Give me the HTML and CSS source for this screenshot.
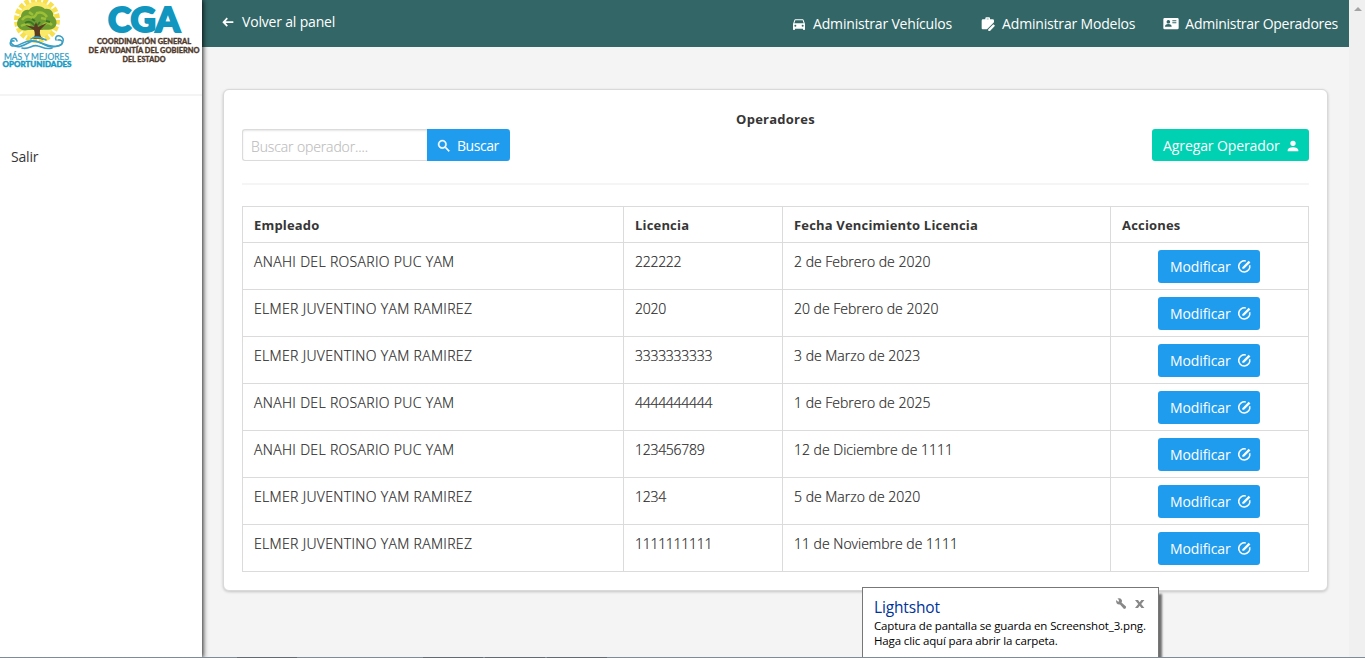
FILE: index.html
```
<!DOCTYPE html>
<html lang="es">
<head>
<meta charset="utf-8">
<title>Operadores</title>
<link rel="stylesheet" href="styles.css">
</head>
<body>
<svg class="defs" aria-hidden="true">
  <symbol id="i-edit" viewBox="0 0 24 24"><path d="M20.300 10A8.900 8.900 0 1 1 14 3.300" fill="none" stroke="currentColor" stroke-width="2.500"/><path d="M8.500 13 18.700 2.800l2.700 2.700L11.200 15.700H8.500z" fill="currentColor"/></symbol>
</svg>
<div class="app">
  <aside class="sidebar">
    <div class="brand">
      <svg class="logo" width="202" height="72" viewBox="0 0 202 72">
        <circle cx="37" cy="20" r="18.500" fill="#fbe96a"/>
        <circle cx="37" cy="20" r="20.500" fill="none" stroke="#f8e04d" stroke-width="5" stroke-dasharray="4.500 1.900"/>
        <path d="M19 28c-4-4-1-10 2-11 0-5 4-8 8-7 3-5 12-5 16-1 5-1 9 3 8 7 4 3 5 9 1 12-5 3-9 1-12 2H28c-4 1-7 0-9-2z" fill="#6e9e31"/>
        <path d="M22 20q4-5 8-3t7-4q6-2 10 4M21 26q5-3 9 0M43 25q5-4 9 0M29 12l4 3M41 18l5 1" fill="none" stroke="#9cbf35" stroke-width="2.500"/>
        <path d="M25 23q5-3 8 1t7-2M46 21l4 1M32 19l3 2" fill="none" stroke="#3c7528" stroke-width="2"/>
        <path d="M33 39q3-4 1-9l-9-5 9 2 2-5 2 5 9-4-7 7q-1 6 4 10-6-2-11-1z" fill="#5c3a22"/>
        <g fill="none" stroke="#3a9fc3" stroke-width="1.600" stroke-linecap="round">
          <path d="M14 41c-5-1-5 5 0 5 8 0 10-7 20-5 9 1 13 7 23 5 8-1 6-7 1-6"/>
          <path d="M17 41c-2-6-9-1-5 3 6 6 14 0 18-2 8-4 14 5 22 5 12 0 14-9 8-11-4-1-5 2-4 4"/>
          <path d="M22 48c7 2 10-4 16-2 5 1 7 4 14 2M31 39c5-4 11-1 15 1"/>
        </g>
        <text class="slogan" x="4" y="59.500" textLength="65" lengthAdjust="spacingAndGlyphs">MÁS Y MEJORES</text>
        <text class="slogan strong" x="2.500" y="67" textLength="69" lengthAdjust="spacingAndGlyphs">OPORTUNIDADES</text>
        <text class="cga" x="108" y="32.300" textLength="72" lengthAdjust="spacingAndGlyphs">CGA</text>
        <text class="org" x="97" y="44" textLength="94" lengthAdjust="spacingAndGlyphs">COORDINACIÓN GENERAL</text>
        <text class="org" x="88.500" y="53" textLength="111" lengthAdjust="spacingAndGlyphs">DE AYUDANTÍA DEL GOBIERNO</text>
        <text class="org" x="122.500" y="62" textLength="43" lengthAdjust="spacingAndGlyphs">DEL ESTADO</text>
      </svg>
    </div>
    <nav class="side-nav"><a>Salir</a></nav>
  </aside>
  <div class="page">
    <header class="topbar">
      <a class="back"><svg width="16" height="16" viewBox="0 0 24 24"><path d="M20 10.800v2.800H8.500l3.300 3.600-1.800 1.800-6.500-6.800L10 5.400l1.800 1.800-3.300 3.600z" fill="currentColor"/></svg><span>Volver al panel</span></a>
      <nav class="top-nav">
        <a class="nv"><svg width="16" height="16" viewBox="0 0 24 24"><path fill="currentColor" d="M5,11L6.500,6.500H17.500L19,11M17.500,16A1.500,1.500 0 0,1 16,14.500A1.500,1.500 0 0,1 17.500,13A1.500,1.500 0 0,1 19,14.500A1.500,1.500 0 0,1 17.500,16M6.500,16A1.500,1.500 0 0,1 5,14.500A1.500,1.500 0 0,1 6.500,13A1.500,1.500 0 0,1 8,14.500A1.500,1.500 0 0,1 6.500,16M18.920,6C18.720,5.420 18.160,5 17.500,5H6.500C5.840,5 5.280,5.420 5.080,6L3,12V20A1,1 0 0,0 4,21H5A1,1 0 0,0 6,20V19H18V20A1,1 0 0,0 19,21H20A1,1 0 0,0 21,20V12L18.920,6Z"/></svg><span>Administrar Vehículos</span></a>
        <a class="nm"><svg width="16" height="16" viewBox="0 0 24 24"><path fill="currentColor" fill-rule="evenodd" d="M8 5V3.500q0-1.500 1.500-1.500h4q1.500 0 1.500 1.500V5h4q2 0 2 2v2.500L10.500 20H4q-1.500 0-1.500-1.500V7q0-2 2-2zm2 0h3V4h-3z"/><path fill="currentColor" d="M12.500 20 20 12.300l2.500 2.500L15 22.500h-2.500z"/></svg><span>Administrar Modelos</span></a>
        <a class="no"><svg width="16" height="16" viewBox="0 0 24 24"><path fill="currentColor" fill-rule="evenodd" d="M2.500 3h19Q23.500 3 23.500 5v13q0 2-2 2h-19q-2 0-2-2V5q0-2 2-2zM8 6a2.700 2.700 0 1 0 .1 0zM3 16h10q0-4-5-4t-5 4zm11-9.500V8h6V6.500zm0 3V11h6V9.500z"/></svg><span>Administrar Operadores</span></a>
      </nav>
    </header>
    <main class="card">
      <h1>Operadores</h1>
      <div class="tools">
        <div class="search"><input type="text" placeholder="Buscar operador...."><button class="btn find"><svg width="16" height="16" viewBox="0 0 24 24"><path fill="currentColor" stroke="currentColor" stroke-width=".5" d="M9.500,3A6.500,6.500 0 0,1 16,9.500C16,11.110 15.410,12.590 14.440,13.730L14.710,14H15.500L20.500,19L19,20.500L14,15.500V14.710L13.730,14.440C12.590,15.410 11.110,16 9.500,16A6.500,6.500 0 0,1 3,9.500A6.500,6.500 0 0,1 9.500,3M9.500,5C7,5 5,7 5,9.500C5,12 7,14 9.500,14C12,14 14,12 14,9.500C14,7 12,5 9.500,5Z"/></svg><span>Buscar</span></button></div>
        <button class="btn add"><span>Agregar Operador</span><svg width="16" height="16" viewBox="0 0 24 24"><path fill="currentColor" d="M12,4A4,4 0 0,1 16,8A4,4 0 0,1 12,12A4,4 0 0,1 8,8A4,4 0 0,1 12,4M12,14C16.420,14 20,15.790 20,18V20H4V18C4,15.790 7.580,14 12,14Z"/></svg></button>
      </div>
      <hr>
      <table>
        <colgroup><col class="c1"><col class="c2"><col class="c3"><col class="c4"></colgroup>
        <thead><tr><th>Empleado</th><th>Licencia</th><th>Fecha Vencimiento Licencia</th><th>Acciones</th></tr></thead>
        <tbody>
          <tr><td>ANAHI DEL ROSARIO PUC YAM</td><td>222222</td><td>2 de Febrero de 2020</td><td><button class="btn mod"><span>Modificar</span><svg width="15" height="15"><use href="#i-edit"/></svg></button></td></tr>
          <tr><td>ELMER JUVENTINO YAM RAMIREZ</td><td>2020</td><td>20 de Febrero de 2020</td><td><button class="btn mod"><span>Modificar</span><svg width="15" height="15"><use href="#i-edit"/></svg></button></td></tr>
          <tr><td>ELMER JUVENTINO YAM RAMIREZ</td><td>3333333333</td><td>3 de Marzo de 2023</td><td><button class="btn mod"><span>Modificar</span><svg width="15" height="15"><use href="#i-edit"/></svg></button></td></tr>
          <tr><td>ANAHI DEL ROSARIO PUC YAM</td><td>4444444444</td><td>1 de Febrero de 2025</td><td><button class="btn mod"><span>Modificar</span><svg width="15" height="15"><use href="#i-edit"/></svg></button></td></tr>
          <tr><td>ANAHI DEL ROSARIO PUC YAM</td><td>123456789</td><td>12 de Diciembre de 1111</td><td><button class="btn mod"><span>Modificar</span><svg width="15" height="15"><use href="#i-edit"/></svg></button></td></tr>
          <tr><td>ELMER JUVENTINO YAM RAMIREZ</td><td>1234</td><td>5 de Marzo de 2020</td><td><button class="btn mod"><span>Modificar</span><svg width="15" height="15"><use href="#i-edit"/></svg></button></td></tr>
          <tr><td>ELMER JUVENTINO YAM RAMIREZ</td><td>1111111111</td><td>11 de Noviembre de 1111</td><td><button class="btn mod"><span>Modificar</span><svg width="15" height="15"><use href="#i-edit"/></svg></button></td></tr>
        </tbody>
      </table>
    </main>
  </div>
  <div class="scrollbar"><span class="arrow-up"></span></div>
</div>
<div class="toast">
  <div class="toast-head"><strong>Lightshot</strong>
    <svg width="30" height="12" viewBox="0 0 30 12"><path d="M1 2l2.500 2L4 2 2.500.600Q6-.5 7 2.500q0 1.500-.5 2L11 8.500Q11.500 11 9 11L5 6.500Q1 7 1 2z" fill="#888"/><path d="M20 2h3l1.700 2.200L26.400 2h3l-3.200 4 3.200 4h-3l-1.700-2.200L23 10h-3l3.200-4z" fill="#888"/></svg>
  </div>
  <p class="l1">Captura de pantalla se guarda en Screenshot_3.png.</p>
  <p class="l2">Haga clic aquí para abrir la carpeta.</p>
</div>
<div class="taskbar"><i></i><i></i><i></i><i></i></div>
</body>
</html>
```
FILE: styles.css
```
* { box-sizing: border-box; }
html, body { height: 100%; overflow: hidden; }
body { margin: 0; background: #f4f4f4; color: #363636; font: 14px/21px "Open Sans", "Noto Sans", sans-serif; letter-spacing: 0; }
.defs { position: absolute; width: 0; height: 0; }
.app { display: flex; height: 658px; }
.sidebar { position: relative; z-index: 2; width: 202px; background: #fff; box-shadow: 1px 0 5px rgba(0,0,0,.9); flex: none; }
.brand { height: 96px; border-bottom: 2px solid #f4f4f4; }
.logo { display: block; overflow: visible; font-family: Lato, sans-serif; letter-spacing: 0; }
.slogan { font-size: 8.5px; font-weight: 400; fill: #2f9cc2; stroke: #2f9cc2; stroke-width: .2px; }
.slogan.strong { font-size: 8px; font-weight: 900; fill: #159bc5; stroke: #159bc5; stroke-width: .4px; }
.cga { font-size: 35px; font-weight: 900; fill: #1096bf; stroke: #1096bf; stroke-width: 2px; }
.org { font-size: 8px; font-weight: 900; fill: #513b2e; stroke: #513b2e; stroke-width: .35px; }
.side-nav { padding: 50px 11px; letter-spacing: -.2px; }
.page { flex: 1; min-width: 0; }
.topbar { display: flex; justify-content: space-between; height: 47px; padding-left: 18px; padding-right: 11px; background: #336666; color: #fff; letter-spacing: -.18px; }
.topbar a { display: flex; align-items: center; height: 21px; }
.back { margin-top: 11px; gap: 6px; }
.top-nav { display: flex; gap: 28px; margin-top: 13px; }
.top-nav a { gap: 6px; }
.top-nav a span, .back span { white-space: nowrap; }
.no { letter-spacing: -.27px; }
.card { width: 1105px; height: 502px; margin: 42px 0 0 21px; padding: 20px 18px; background: #fff; border: 1px solid #d9d9d9; border-radius: 6px; box-shadow: 0 1px 3px rgba(0,0,0,.2); }
h1 { margin: 0; height: 19px; font-size: 13px; line-height: 19px; text-align: center; letter-spacing: .25px; }
.tools { display: flex; justify-content: space-between; height: 32px; }
.search { display: flex; }
input { width: 185px; height: 32px; padding: 2px 8px 0; border: 1px solid #dbdbdb; border-right: 0; border-radius: 3px 0 0 3px; box-shadow: inset 0 1px 2px rgba(10,10,10,.1); font: inherit; letter-spacing: -.12px; }
input::placeholder { color: #bdbdbd; font-weight: 300; -webkit-text-stroke: .15px #bdbdbd; }
.btn { display: flex; align-items: center; justify-content: flex-start; padding: 1px 0 0; border: 0; border-radius: 3px; background: #209cee; color: #fff; font: inherit; letter-spacing: -.1px; white-space: nowrap; }
.find { width: 83px; padding-left: 9px; gap: 5px; border-radius: 0 3px 3px 0; letter-spacing: -.45px; }
.add { width: 157px; padding-left: 11px; gap: 5px; background: #00d1b2; }
hr { height: 2px; margin: 22px 0 21px; border: 0; background: #f5f5f5; }
table { width: 1067px; table-layout: fixed; border-collapse: collapse; }
.c1 { width: 381px; } .c2 { width: 159px; } .c3 { width: 328px; } .c4 { width: 198px; }
th, td { border: 1px solid #dbdbdb; padding: 8px 11px 0; text-align: left; vertical-align: top; white-space: nowrap; }
th { height: 36px; font-weight: 700; font-size: 13px; letter-spacing: .18px; }
td { height: 47px; font-weight: 300; color: #2b2b2b; -webkit-text-stroke: .2px #2b2b2b; }
td:nth-child(1) { letter-spacing: .33px; }
td:nth-child(2) { letter-spacing: -.28px; }
td:last-child { padding: 7px 0 0 47px; -webkit-text-stroke: 0; }
.mod { width: 102px; height: 33px; padding: 0 0 0 12px; gap: 6px; font-weight: 400; }
.scrollbar { width: 16px; background: #f0f0f0; }
.arrow-up { display: block; width: 0; margin: 7px 0 0 5px; border: 4px solid transparent; border-top: 0; border-bottom-color: #a3a3a3; }
.toast { position: absolute; z-index: 3; left: 862px; top: 587px; width: 297px; height: 75px; padding: 10px 12px 0 11px; border: 1px solid #777; background: #fff; box-shadow: 3px 7px 2px rgba(0,0,0,.55); color: #000; font-size: 11.5px; line-height: 15px; letter-spacing: -.14px; }
.toast-head { display: flex; justify-content: space-between; height: 20px; line-height: 19px; }
.toast-head svg { margin-right: 1px; }
.toast strong { color: #003399; font-size: 15.5px; font-weight: 400; }
.toast p { margin: 0; white-space: nowrap; }
.taskbar { position: absolute; z-index: 4; left: 0; right: 0; bottom: 0; height: 1px; display: flex; gap: 2px; padding-left: 237px; background: #7f8b96; }
.taskbar i { width: 60px; background: #626b74; }
.taskbar i:first-child { margin-right: 124px; }
```
